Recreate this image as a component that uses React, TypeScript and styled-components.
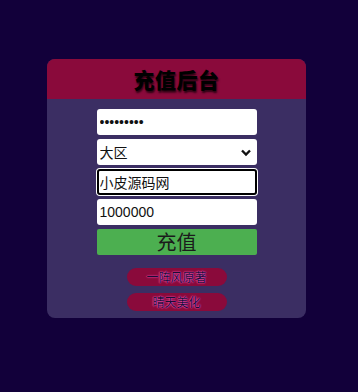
import * as React from "react";
import styled, { createGlobalStyle } from "styled-components";

const GlobalStyle = createGlobalStyle`
  html, body {
    margin: 0;
    padding: 0;
    background-color: #12003a;
    font-family: "Liberation Sans", "Noto Sans CJK SC", sans-serif;
  }
  body {
    min-height: 392px;
  }
`;

const Card = styled.div`
  width: 259px;
  height: 259px;
  margin: 59px 0 0 47px;
  border-radius: 8px;
  overflow: hidden;
  background-color: #3b2e63;
  display: flex;
  flex-direction: column;
`;

const Header = styled.div`
  height: 40px;
  background-color: #8a0a3b;
  display: flex;
  align-items: center;
  justify-content: center;
`;

const Title = styled.h1`
  margin: 0;
  font-size: 21px;
  font-weight: 900;
  color: #000;
  text-shadow: 1px 2px 2px rgba(0, 0, 0, 0.7);
  font-family: "Noto Sans CJK SC", sans-serif;
  letter-spacing: 0.5px;
`;

const Form = styled.div`
  display: flex;
  flex-direction: column;
  align-items: center;
  padding-top: 10px;
  gap: 4px;
`;

const Field = styled.input<{ $focused?: boolean }>`
  box-sizing: border-box;
  width: 160px;
  height: 26px;
  border: ${(p) => (p.$focused ? "2px solid #000" : "none")};
  border-radius: 3px;
  box-shadow: ${(p) => (p.$focused ? "0 0 0 1px #fff" : "none")};
  background: #fff;
  padding: 0 ${(p) => (p.$focused ? "1px" : "3px")};
  font-size: 14px;
  color: #111;
  font-family: "Liberation Sans", "Noto Sans CJK SC", sans-serif;
  outline: none;
`;

const SelectWrap = styled.div`
  position: relative;
  width: 160px;
  height: 26px;
`;

const Select = styled.select`
  box-sizing: border-box;
  width: 100%;
  height: 100%;
  appearance: none;
  border: none;
  border-radius: 3px;
  background: #fff;
  padding: 0 3px;
  font-size: 14px;
  color: #111;
  font-family: "Noto Sans CJK SC", sans-serif;
  outline: none;
`;

const Chevron = styled.svg`
  position: absolute;
  right: 5px;
  top: 9px;
  pointer-events: none;
`;

const Submit = styled.button`
  width: 160px;
  height: 26px;
  border: none;
  border-radius: 2px;
  background-color: #4caf50;
  color: #1b1b1b;
  font-size: 20px;
  line-height: 26px;
  padding: 0;
  font-family: "Noto Sans CJK SC", sans-serif;
`;

const Links = styled.div`
  display: flex;
  flex-direction: column;
  align-items: center;
  gap: 7px;
  margin-top: 13px;
`;

const Pill = styled.button`
  width: 100px;
  height: 18px;
  border: none;
  border-radius: 9px;
  background-color: #8a0a3b;
  color: #1c0c36;
  font-size: 12px;
  line-height: 18px;
  padding: 0;
  font-family: "Noto Sans CJK SC", sans-serif;
  text-shadow: 0 0 1px #ff60d0, 0 0 2px #ff60d0;
`;

export default function App() {
  return (
    <>
      <GlobalStyle />
      <Card>
        <Header>
          <Title>充值后台</Title>
        </Header>
        <Form>
          <Field type="password" defaultValue="123456789" />
          <SelectWrap>
            <Select defaultValue="大区">
              <option>大区</option>
            </Select>
            <Chevron width="12" height="9" viewBox="0 0 12 9">
              <path d="M2 2.5 L6 6.5 L10 2.5" fill="none" stroke="#111" strokeWidth="2.4" />
            </Chevron>
          </SelectWrap>
          <Field $focused type="text" defaultValue="小皮源码网" />
          <Field type="text" defaultValue="1000000" />
          <Submit>充值</Submit>
        </Form>
        <Links>
          <Pill>一阵风原著</Pill>
          <Pill>晴天美化</Pill>
        </Links>
      </Card>
    </>
  );
}
